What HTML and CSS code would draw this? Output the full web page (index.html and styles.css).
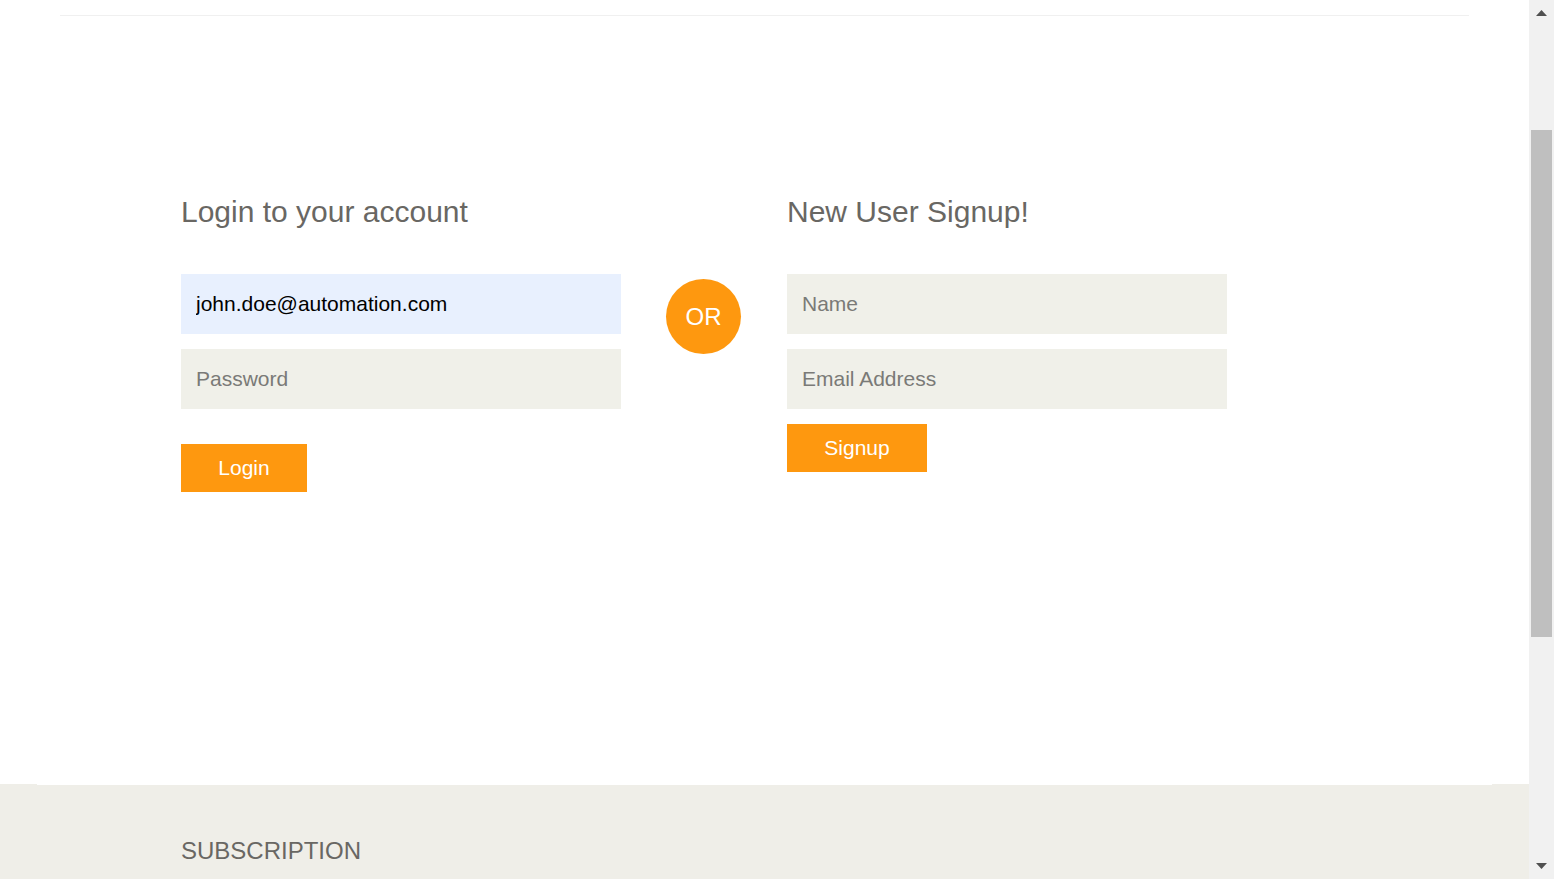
FILE: index.html
```html
<!DOCTYPE html>
<html lang="en">
<head>
<meta charset="utf-8">
<title>Automation Exercise - Signup / Login</title>
<link rel="stylesheet" href="styles.css">
</head>
<body>
<div class="page">
  <div class="main">
    <div class="header-line"></div>
    <section class="form-section">
      <div class="form-row">
        <div class="form-col">
          <h2 class="form-title">Login to your account</h2>
          <form class="form">
            <input class="field autofilled" type="email" value="john.doe@automation.com">
            <input class="field" type="password" placeholder="Password">
            <button class="btn btn-login" type="button">Login</button>
          </form>
        </div>
        <div class="or-col"><span class="or">OR</span></div>
        <div class="form-col">
          <h2 class="form-title">New User Signup!</h2>
          <form class="form">
            <input class="field" type="text" placeholder="Name">
            <input class="field" type="email" placeholder="Email Address">
            <button class="btn btn-signup" type="button">Signup</button>
          </form>
        </div>
      </div>
    </section>
    <footer class="footer">
      <div class="footer-edge"></div>
      <h2 class="subscription">SUBSCRIPTION</h2>
    </footer>
  </div>
  <div class="scrollbar">
    <div class="sb-arrow sb-up">
      <svg width="11" height="6" viewBox="0 0 11 6"><path d="M5.5 0 L11 6 L0 6 Z" fill="#505050"/></svg>
    </div>
    <div class="sb-track"><div class="sb-thumb"></div></div>
    <div class="sb-arrow sb-down">
      <svg width="11" height="6" viewBox="0 0 11 6"><path d="M0 0 L11 0 L5.5 6 Z" fill="#505050"/></svg>
    </div>
  </div>
</div>
</body>
</html>
```
FILE: styles.css
```css
* { box-sizing: border-box; }
html, body { margin: 0; padding: 0; }
body {
  font-family: "Liberation Sans", Arial, sans-serif;
  background: #fff;
  color: #696763;
  overflow: hidden;
}
.page {
  display: flex;
  width: 1554px;
  height: 879px;
  overflow: hidden;
}
.main {
  width: 1529px;
  flex: none;
  display: flex;
  flex-direction: column;
}
.header-line {
  margin: 15px 60px 0;
  height: 1px;
  background: #f0f0f0;
}
.form-section {
  padding: 180px 0 292px 181px;
}
.form-row {
  display: flex;
  align-items: flex-start;
}
.form-col {
  width: 440px;
}
.form-title {
  margin: -1px 0 46px;
  font-size: 30px;
  line-height: 33px;
  font-weight: 300;
  color: #696763;
}
.form {
  display: flex;
  flex-direction: column;
  gap: 15px;
}
.field {
  display: block;
  width: 440px;
  height: 60px;
  border: none;
  outline: none;
  background: #F0F0E9;
  padding: 0 15px;
  font-family: "Liberation Sans", Arial, sans-serif;
  font-size: 21px;
  color: #696763;
}
.field::placeholder { color: #7a7a77; }
.field.autofilled {
  background: #E8F0FE;
  color: #000;
}
.btn {
  display: block;
  height: 48px;
  border: none;
  background: #FE980F;
  color: #fff;
  font-family: "Liberation Sans", Arial, sans-serif;
  font-size: 21px;
  padding: 0;
  cursor: pointer;
}
.btn-login { width: 126px; margin-top: 20px; }
.btn-signup { width: 140px; }
.or-col {
  margin: 83px 46px 0 45px;
}
.or {
  display: flex;
  align-items: center;
  justify-content: center;
  width: 75px;
  height: 75px;
  border-radius: 50%;
  background: #FE980F;
  color: #fff;
  font-size: 24px;
}
.footer {
  flex: 1;
  background: #EFEEE8;
}
.footer-edge {
  height: 1px;
  margin: 0 37px;
  background: #fff;
}
.subscription {
  margin: 0;
  padding: 52px 0 0 181px;
  font-size: 24px;
  line-height: 27px;
  font-weight: 400;
  color: #696763;
}
.scrollbar {
  width: 25px;
  flex: none;
  background: #F1F1F1;
  display: flex;
  flex-direction: column;
}
.sb-arrow {
  height: 26px;
  display: flex;
  justify-content: center;
  flex: none;
}
.sb-up { align-items: flex-start; padding-top: 10px; }
.sb-down { align-items: flex-end; padding-bottom: 10px; }
.sb-track {
  flex: 1;
  padding: 104px 2px 0;
}
.sb-thumb {
  height: 507px;
  background: #BFBFBF;
}
```
